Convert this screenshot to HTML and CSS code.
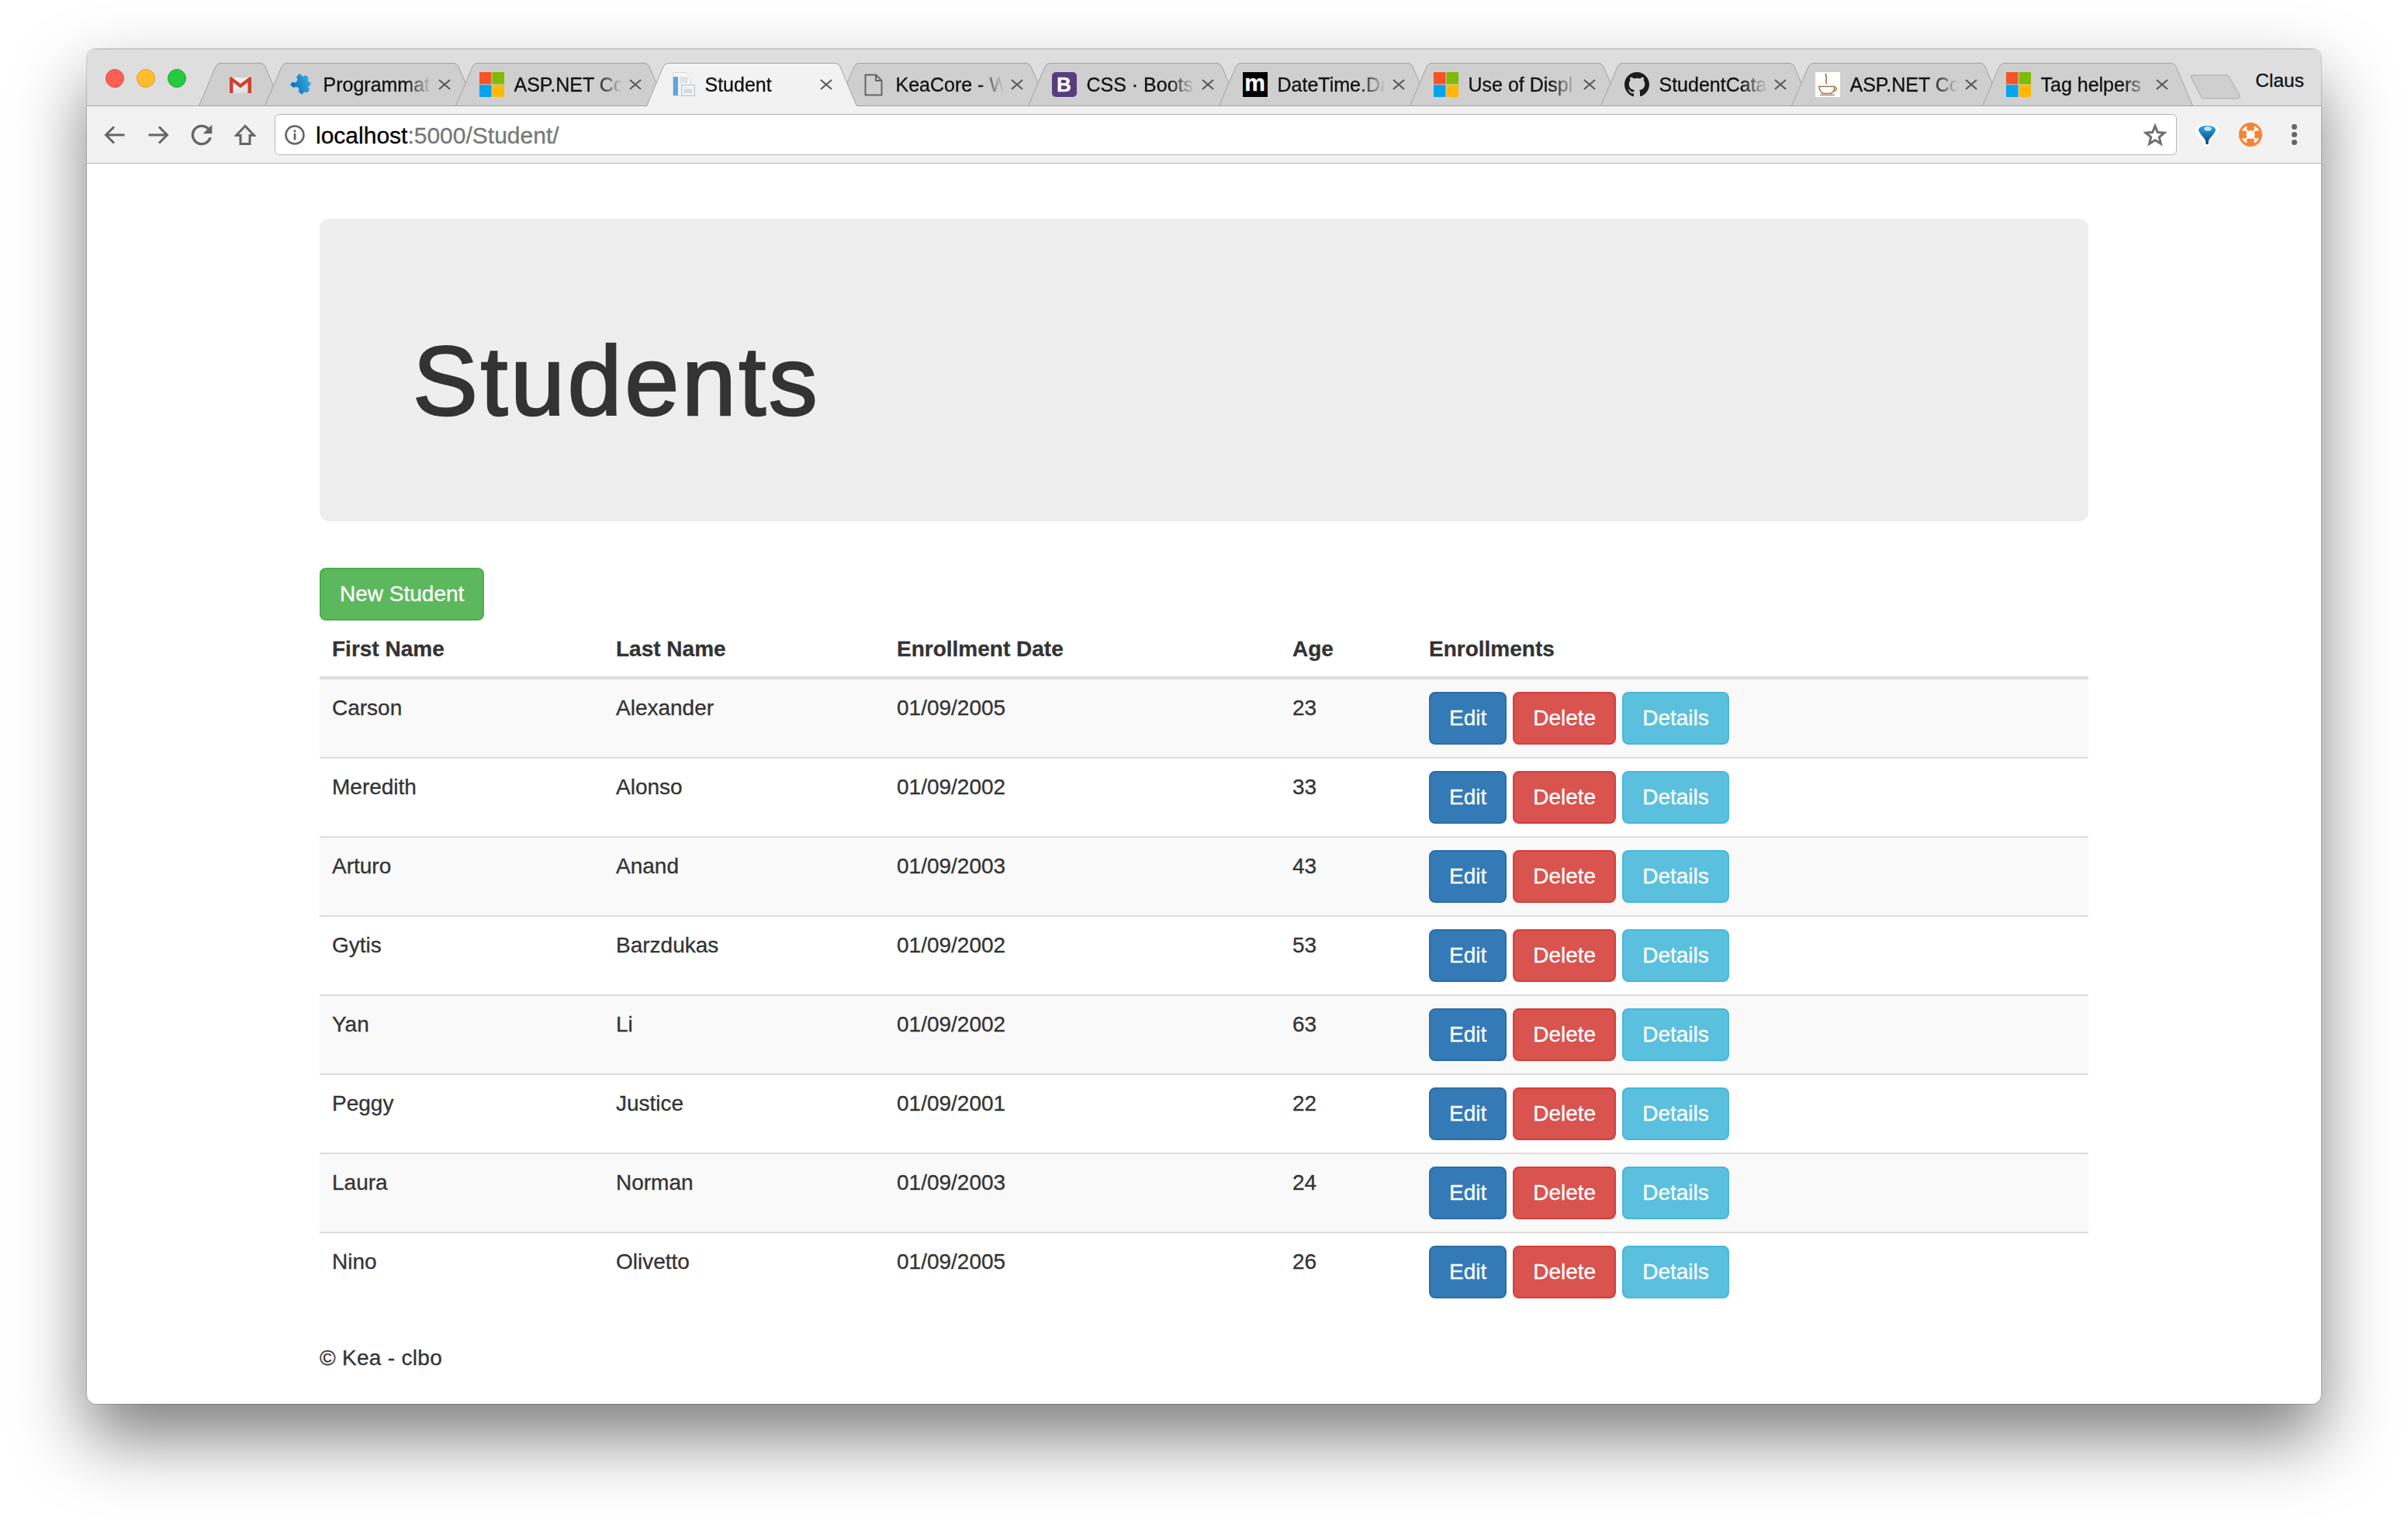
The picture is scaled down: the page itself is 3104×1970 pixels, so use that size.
FILE: index.html
```html
<!DOCTYPE html>
<html lang="en">
<head>
  <meta charset="UTF-8">
  <title>Student</title>
  <link rel="stylesheet" href="styles.css">
</head>
<body>

<svg class="defs" width="0" height="0">
  <defs>
    <path id="tabClosed" d="M.5 55.500 L22 5 Q24 .5 28 .5 H244 Q248 .5 250 5 L271.500 55.500 Z"/>
    <path id="tabOpen" d="M.5 56 L22 5 Q24 .5 28 .5 H244 Q248 .5 250 5 L271.500 56"/>
    <g id="ms">
      <rect x="0" y="0" width="15.500" height="15.500" fill="#f65426"/>
      <rect x="16.500" y="0" width="15.500" height="15.500" fill="#80ba01"/>
      <rect x="0" y="16.500" width="15.500" height="15.500" fill="#02a4ef"/>
      <rect x="16.500" y="16.500" width="15.500" height="15.500" fill="#ffb902"/>
    </g>
    <path id="close" d="M1 2L15 14M15 2L1 14"/>
    <linearGradient id="puzzleFill" x1="1" y1="0" x2="0.4" y2="1">
      <stop offset="0" stop-color="#45b8e4"/>
      <stop offset="1" stop-color="#0d79c2"/>
    </linearGradient>
    <linearGradient id="veeFill" x1="0" y1="0" x2="0" y2="1">
      <stop offset="0" stop-color="#2ea6e6"/>
      <stop offset="1" stop-color="#07406f"/>
    </linearGradient>
    <linearGradient id="gmailFill" x1="0" y1="0" x2="1" y2="1">
      <stop offset="0" stop-color="#f4f4f4"/>
      <stop offset="1" stop-color="#dcdcdc"/>
    </linearGradient>
  </defs>
</svg>

<div class="window">
  <div class="titlebar">
    <div class="lights">
      <span class="light light-red"></span>
      <span class="light light-yellow"></span>
      <span class="light light-green"></span>
    </div>
    <div class="tabs">
      <div class="tab tab-pinned">
        <svg class="tab-shape" width="108" height="56" viewBox="0 0 108 56"><path d="M.5 55.500 L22 5 Q24 .5 28 .5 H80 Q84 .5 86 5 L107.500 55.500 Z"/></svg>
        <svg class="fav-gmail" width="28" height="21" viewBox="0 0 28 21">
          <rect x="3" y="1" width="22" height="20" fill="url(#gmailFill)"/>
          <path d="M0 1.500Q0 0 2 0L14 9L26 0Q28 0 28 1.500V21H23.500V7L14 14.500L4.500 7V21H0Z" fill="#d2402f"/>
        </svg>
      </div>
      <div class="tab">
        <svg class="tab-shape" width="272" height="56"><use href="#tabClosed"/></svg>
        <svg class="fav" width="32" height="32" viewBox="0 0 32 32"><g transform="rotate(40 16 15) translate(16 15) scale(1.250) translate(-16 -16)"><path d="M8 9h5a3 3 0 1 1 6 0h5v5a3 3 0 1 1 0 6v4h-5a3 3 0 1 0-6 0H8v-4a3 3 0 1 0 0-6z" fill="url(#puzzleFill)"/></g></svg>
        <span class="tab-title">Programmat</span>
        <svg class="tab-x" width="16" height="16"><use href="#close"/></svg>
      </div>
      <div class="tab">
        <svg class="tab-shape" width="272" height="56"><use href="#tabClosed"/></svg>
        <svg class="fav" width="32" height="32"><use href="#ms"/></svg>
        <span class="tab-title">ASP.NET Co</span>
        <svg class="tab-x" width="16" height="16"><use href="#close"/></svg>
      </div>
      <div class="tab tab-active">
        <svg class="tab-shape" width="272" height="56"><use href="#tabOpen"/></svg>
        <svg class="fav" width="32" height="32" viewBox="0 0 32 32">
          <path d="M3.500 .5H20L26.500 7V30.500H3.500Z" fill="#f4f6f8" stroke="#d3d8de"/>
          <rect x="4" y="6" width="6" height="24" fill="#62a4dc"/>
          <rect x="12" y="6" width="11" height="8" fill="#e0e4e9"/>
          <rect x="14.500" y="16.500" width="17" height="14" fill="#eef0f3" stroke="#bcc2c9"/>
          <rect x="18" y="22" width="10" height="5" fill="#d5dae0"/>
        </svg>
        <span class="tab-title">Student</span>
        <svg class="tab-x" width="16" height="16"><use href="#close"/></svg>
      </div>
      <div class="tab">
        <svg class="tab-shape" width="272" height="56"><use href="#tabClosed"/></svg>
        <svg class="fav" width="32" height="32" viewBox="0 0 32 32"><path d="M5.500 3.500H19L26.500 11V29.500H5.500ZM19 3.500V11H26.500" fill="none" stroke="#666" stroke-width="2"/></svg>
        <span class="tab-title">KeaCore - W</span>
        <svg class="tab-x" width="16" height="16"><use href="#close"/></svg>
      </div>
      <div class="tab">
        <svg class="tab-shape" width="272" height="56"><use href="#tabClosed"/></svg>
        <span class="fav fav-bootstrap">B</span>
        <span class="tab-title">CSS · Boots</span>
        <svg class="tab-x" width="16" height="16"><use href="#close"/></svg>
      </div>
      <div class="tab">
        <svg class="tab-shape" width="272" height="56"><use href="#tabClosed"/></svg>
        <span class="fav fav-m">m</span>
        <span class="tab-title">DateTime.Da</span>
        <svg class="tab-x" width="16" height="16"><use href="#close"/></svg>
      </div>
      <div class="tab">
        <svg class="tab-shape" width="272" height="56"><use href="#tabClosed"/></svg>
        <svg class="fav" width="32" height="32"><use href="#ms"/></svg>
        <span class="tab-title">Use of Displ</span>
        <svg class="tab-x" width="16" height="16"><use href="#close"/></svg>
      </div>
      <div class="tab">
        <svg class="tab-shape" width="272" height="56"><use href="#tabClosed"/></svg>
        <svg class="fav" width="32" height="32" viewBox="0 0 16 16"><path fill="#1b1b1b" d="M8 0C3.580 0 0 3.580 0 8c0 3.540 2.290 6.530 5.470 7.590.4.070.55-.17.55-.38 0-.19-.01-.82-.01-1.490-2.010.37-2.530-.49-2.690-.94-.09-.23-.48-.94-.82-1.130-.28-.15-.68-.52-.01-.53.63-.01 1.080.58 1.230.82.72 1.210 1.870.87 2.330.66.07-.52.28-.87.51-1.070-1.780-.2-3.640-.89-3.640-3.950 0-.87.31-1.590.82-2.150-.08-.2-.36-1.020.08-2.120 0 0 .67-.21 2.200.82.64-.18 1.320-.27 2-.27.68 0 1.360.09 2 .27 1.530-1.040 2.200-.82 2.200-.82.44 1.100.16 1.920.08 2.120.51.56.82 1.270.82 2.150 0 3.070-1.870 3.750-3.650 3.950.29.25.54.73.54 1.480 0 1.070-.01 1.930-.01 2.200 0 .21.15.46.55.38A8.013 8.013 0 0016 8c0-4.420-3.580-8-8-8z"/></svg>
        <span class="tab-title">StudentCata</span>
        <svg class="tab-x" width="16" height="16"><use href="#close"/></svg>
      </div>
      <div class="tab">
        <svg class="tab-shape" width="272" height="56"><use href="#tabClosed"/></svg>
        <svg class="fav" width="32" height="32" viewBox="0 0 32 32">
          <rect width="32" height="32" fill="#fff"/>
          <path d="M14 2c-2 3 2 5 0 8c-1 2 0 3 1 5" fill="none" stroke="#8a5a3a" stroke-width="1.400"/>
          <path d="M5 18.500h20c0 4-2 7.500-5 9h-10c-3-1.500-5-5-5-9z" fill="#fff" stroke="#a5744a" stroke-width="1.500"/>
          <path d="M25 20c4-1 3 4-1.500 4.500" fill="none" stroke="#a5744a" stroke-width="1.300"/>
          <path d="M6 29.500h19" stroke="#b08a64" stroke-width="1.500"/>
        </svg>
        <span class="tab-title">ASP.NET Co</span>
        <svg class="tab-x" width="16" height="16"><use href="#close"/></svg>
      </div>
      <div class="tab">
        <svg class="tab-shape" width="272" height="56"><use href="#tabClosed"/></svg>
        <svg class="fav" width="32" height="32"><use href="#ms"/></svg>
        <span class="tab-title">Tag helpers</span>
        <svg class="tab-x" width="16" height="16"><use href="#close"/></svg>
      </div>
      <svg class="new-tab" width="66" height="32" viewBox="0 0 66 32"><path d="M1.500 4Q0 1 4 1H47Q50 1 51 4L64 27Q65 31 61 31H18Q15 31 14 28Z"/></svg>
    </div>
    <span class="profile">Claus</span>
  </div>

  <div class="toolbar">
    <span class="nav-slot"><svg width="28" height="28" viewBox="0 0 28 28"><path class="nav-line" d="M26.500 14H3M13 3.500L2.500 14L13 24.500"/></svg></span>
    <span class="nav-slot"><svg width="28" height="28" viewBox="0 0 28 28"><path class="nav-line" d="M1.500 14H25M15 3.500L25.500 14L15 24.500"/></svg></span>
    <span class="nav-slot"><svg width="40" height="40" viewBox="0 0 24 24"><path class="nav-fill" d="M17.650 6.350A7.950 7.950 0 0 0 12 4a8 8 0 1 0 7.730 10h-2.080A6 6 0 1 1 12 6c1.660 0 3.140.69 4.220 1.780L13 11h7V4z"/></svg></span>
    <span class="nav-slot"><svg width="28" height="28" viewBox="0 0 28 28"><path class="nav-line" d="M14 2.500L2.500 14.500H8V25.500H20V14.500H25.500Z"/></svg></span>
    <div class="omnibox">
      <svg class="info" width="26" height="26" viewBox="0 0 26 26">
        <circle cx="13" cy="13" r="11.500" fill="none" stroke="#666" stroke-width="2.600"/>
        <rect x="11.600" y="6.500" width="2.800" height="3" fill="#666"/>
        <rect x="11.600" y="11" width="2.800" height="8.500" fill="#666"/>
      </svg>
      <span class="url"><span class="url-host">localhost</span>:5000/Student/</span>
      <svg class="star" width="30" height="30" viewBox="0 0 30 30"><path d="M15 3.500L18.300 11.600L27 12.200L20.300 17.800L22.400 26.300L15 21.700L7.600 26.300L9.700 17.800L3 12.200L11.700 11.600Z" fill="none" stroke="#6e6e6e" stroke-width="3"/></svg>
    </div>
    <span class="ext-slot">
      <svg width="32" height="32" viewBox="0 0 32 32">
        <path d="M1 9C3 2 9 1 16 1s13 1 15 8c0 5-7 10-10 15c-1 3-1 7-5 7s-5-4-6-7C7 19 1 14 1 9z" fill="#fff"/>
        <path d="M5 9C6 5 11 4 16 4s10 1 11 5c0 4-6 9-9 14l-.5 5h-3l-.5-5C11 18 5 13 5 9z" fill="url(#veeFill)"/>
        <ellipse cx="17" cy="8" rx="5" ry="3" fill="#bfe6f8"/>
      </svg>
    </span>
    <span class="ext-slot">
      <svg width="30" height="31" viewBox="0 0 30 31">
        <ellipse cx="15" cy="15.500" rx="15" ry="15.500" fill="#f58436"/>
        <path d="M8 8.500L22 22.500M22 8.500L8 22.500" stroke="#fff" stroke-width="2.400"/>
        <circle cx="15" cy="15.500" r="5.500" fill="#fff"/>
        <path d="M5 10.500L10 5.500M20 5.500L25 10.500M5 20.500L10 25.500M20 25.500L25 20.500" stroke="#fff" stroke-width="3"/>
      </svg>
    </span>
    <span class="ext-slot menu-dots"><i></i><i></i><i></i></span>
  </div>

  <div class="page">
    <div class="jumbotron">
      <h1>Students</h1>
    </div>

    <a class="btn btn-success">New Student</a>

    <table class="table">
      <thead>
        <tr>
          <th class="col-first">First Name</th>
          <th class="col-last">Last Name</th>
          <th class="col-date">Enrollment Date</th>
          <th class="col-age">Age</th>
          <th>Enrollments</th>
        </tr>
      </thead>
      <tbody>
        <tr>
          <td>Carson</td><td>Alexander</td><td>01/09/2005</td><td>23</td>
          <td><div class="actions"><a class="btn btn-primary">Edit</a><a class="btn btn-danger">Delete</a><a class="btn btn-info">Details</a></div></td>
        </tr>
        <tr>
          <td>Meredith</td><td>Alonso</td><td>01/09/2002</td><td>33</td>
          <td><div class="actions"><a class="btn btn-primary">Edit</a><a class="btn btn-danger">Delete</a><a class="btn btn-info">Details</a></div></td>
        </tr>
        <tr>
          <td>Arturo</td><td>Anand</td><td>01/09/2003</td><td>43</td>
          <td><div class="actions"><a class="btn btn-primary">Edit</a><a class="btn btn-danger">Delete</a><a class="btn btn-info">Details</a></div></td>
        </tr>
        <tr>
          <td>Gytis</td><td>Barzdukas</td><td>01/09/2002</td><td>53</td>
          <td><div class="actions"><a class="btn btn-primary">Edit</a><a class="btn btn-danger">Delete</a><a class="btn btn-info">Details</a></div></td>
        </tr>
        <tr>
          <td>Yan</td><td>Li</td><td>01/09/2002</td><td>63</td>
          <td><div class="actions"><a class="btn btn-primary">Edit</a><a class="btn btn-danger">Delete</a><a class="btn btn-info">Details</a></div></td>
        </tr>
        <tr>
          <td>Peggy</td><td>Justice</td><td>01/09/2001</td><td>22</td>
          <td><div class="actions"><a class="btn btn-primary">Edit</a><a class="btn btn-danger">Delete</a><a class="btn btn-info">Details</a></div></td>
        </tr>
        <tr>
          <td>Laura</td><td>Norman</td><td>01/09/2003</td><td>24</td>
          <td><div class="actions"><a class="btn btn-primary">Edit</a><a class="btn btn-danger">Delete</a><a class="btn btn-info">Details</a></div></td>
        </tr>
        <tr>
          <td>Nino</td><td>Olivetto</td><td>01/09/2005</td><td>26</td>
          <td><div class="actions"><a class="btn btn-primary">Edit</a><a class="btn btn-danger">Delete</a><a class="btn btn-info">Details</a></div></td>
        </tr>
      </tbody>
    </table>

    <footer class="footer">© Kea - clbo</footer>
  </div>
</div>

</body>
</html>
```

FILE: styles.css
```css
html, body {
  margin: 0;
  height: 1970px;
  overflow: hidden;
}
body {
  box-sizing: border-box;
  padding: 63px 112px 0;
  background-color: #fff;
  font-family: "Liberation Sans", Arial, sans-serif;
  font-size: 28px;
  line-height: 42px;
  color: #333;
  -webkit-text-stroke: 0.3px;
}
.defs {
  position: absolute;
}

/* browser window */
.window {
  width: 2880px;
  background-color: #fff;
  border-radius: 12px;
  overflow: hidden;
  box-shadow: 0 0 0 1px rgba(0, 0, 0, 0.16), 0 44px 88px rgba(0, 0, 0, 0.5);
}
.titlebar {
  position: relative;
  display: flex;
  align-items: flex-end;
  box-sizing: border-box;
  height: 74px;
  background-color: #dedede;
  border-top: 1px solid #c6c6c6;
  border-bottom: 1px solid #a9a9a9;
}
.lights {
  display: flex;
  gap: 16px;
  align-self: flex-start;
  width: 120px;
  padding: 25px 0 0 24px;
}
.light {
  width: 22px;
  height: 22px;
  border-radius: 50%;
  border: 1px solid;
}
.light-red { background-color: #ff5f57; border-color: #e2463f; }
.light-yellow { background-color: #ffbd2e; border-color: #e1a116; }
.light-green { background-color: #28c940; border-color: #14ae2b; }

/* tabs */
.tabs {
  display: flex;
  align-items: flex-end;
  margin-bottom: -1px;
  font-size: 25px;
  line-height: 32px;
  color: #111;
}
.tab {
  position: relative;
  display: flex;
  align-items: center;
  box-sizing: border-box;
  flex: none;
  width: 272px;
  height: 56px;
  margin-right: -26px;
  padding-left: 31px;
}
.tab-pinned {
  width: 108px;
  margin-right: -23.500px;
  padding-left: 40px;
}
.tab-active {
  z-index: 2;
}
.tab-shape {
  position: absolute;
  left: 0;
  top: 0;
  fill: #cfcfcf;
  stroke: #a3a3a3;
  stroke-width: 1;
}
.tab-active .tab-shape {
  fill: #f2f2f2;
}
.fav, .fav-gmail, .tab-title, .tab-x {
  position: relative;
}
.fav {
  flex: none;
  width: 32px;
  height: 32px;
  margin-right: 13px;
}
.fav-gmail {
  flex: none;
}
.fav-bootstrap {
  background-color: #563d7c;
  border-radius: 5px;
  color: #fff;
  font-weight: bold;
  font-size: 26px;
  text-align: center;
}
.fav-m {
  background-color: #000;
  color: #fff;
  font-weight: bold;
  font-size: 30px;
  line-height: 28px;
  text-align: center;
}
.tab-title {
  flex: none;
  width: 146px;
  white-space: nowrap;
  -webkit-mask-image: linear-gradient(to right, #000 106px, transparent 139px);
  mask-image: linear-gradient(to right, #000 106px, transparent 139px);
}
.tab-x {
  flex: none;
  margin-left: 2px;
  fill: none;
  stroke: #555;
  stroke-width: 2;
}
.new-tab {
  flex: none;
  margin: 0 0 9px 22px;
  fill: #cfcfcf;
  stroke: #a9a9a9;
}
.profile {
  position: absolute;
  right: 22px;
  top: 24px;
  font-size: 24.500px;
  line-height: 32px;
  color: #111;
}

/* toolbar */
.toolbar {
  display: flex;
  align-items: center;
  box-sizing: border-box;
  height: 74px;
  padding-left: 8px;
  background-color: #f2f2f2;
  border-bottom: 1px solid #b4b4b4;
}
.nav-slot, .ext-slot {
  display: flex;
  align-items: center;
  justify-content: center;
  flex: none;
  width: 56px;
}
.nav-line {
  fill: none;
  stroke: #666;
  stroke-width: 3;
}
.nav-fill {
  fill: #666;
}
.omnibox {
  display: flex;
  align-items: center;
  box-sizing: border-box;
  width: 2452px;
  height: 53px;
  margin: 0 11px 0 10px;
  padding: 0 12px;
  background-color: #fff;
  border: 1px solid #b5b5b5;
  border-radius: 6px;
}
.info {
  flex: none;
  margin-right: 14px;
}
.url {
  flex: 1;
  padding-top: 2px;
  font-size: 30px;
  line-height: 40px;
  color: #777;
}
.url-host {
  color: #000;
}
.star {
  flex: none;
}
.menu-dots {
  flex-direction: column;
  gap: 3px;
}
.menu-dots i {
  width: 7px;
  height: 7px;
  border-radius: 50%;
  background-color: #666;
}

/* page */
.page {
  padding: 71px 300px 38px;
}
.jumbotron {
  box-sizing: border-box;
  height: 390px;
  margin-bottom: 60px;
  padding: 140px 120px 0;
  background-color: #eee;
  border-radius: 12px;
}
.jumbotron h1 {
  margin: 0;
  font-size: 126px;
  font-weight: 500;
  line-height: 139px;
  letter-spacing: 3.500px;
  color: #333;
  -webkit-text-stroke: 2.500px #333;
}
.btn {
  display: inline-block;
  box-sizing: border-box;
  height: 68px;
  padding: 11px 24px;
  border: 2px solid;
  border-radius: 8px;
  color: #fff;
  vertical-align: top;
}
.btn-success { background-color: #5cb85c; border-color: #4cae4c; }
.btn-primary { background-color: #337ab7; border-color: #2e6da4; }
.btn-danger { background-color: #d9534f; border-color: #d43f3a; }
.btn-info { background-color: #5bc0de; border-color: #46b8da; }

.table {
  width: 100%;
  border-collapse: collapse;
  table-layout: fixed;
}
.table th, .table td {
  padding: 16px;
  text-align: left;
  vertical-align: top;
}
.table th {
  padding-bottom: 14px;
  font-weight: bold;
  border-bottom: 4px solid #ddd;
}
.table td {
  border-top: 2px solid #ddd;
}
.table tbody tr:first-child td {
  border-top: 0;
}
.table tbody tr:nth-child(odd) {
  background-color: #f9f9f9;
}
.col-first { width: 334px; }
.col-last { width: 330px; }
.col-date { width: 478px; }
.col-age { width: 144px; }
.actions {
  display: flex;
  gap: 8px;
}
.footer {
  margin-top: 40px;
  letter-spacing: 0.3px;
}
```
